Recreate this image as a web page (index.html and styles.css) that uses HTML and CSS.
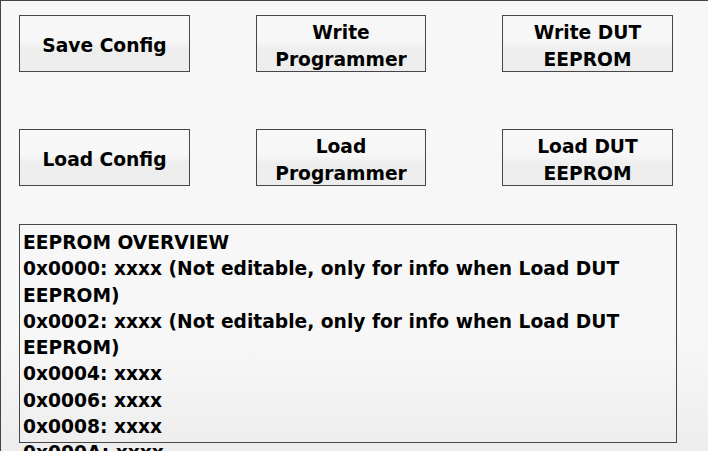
FILE: index.html
```
<!DOCTYPE html>
<html>
<head>
<meta charset="utf-8">
<link rel="stylesheet" href="styles.css">
</head>
<body>
<div class="window">
  <div class="buttons">
    <div class="btn">Save Config</div>
    <div class="btn">Write<br>Programmer</div>
    <div class="btn">Write DUT<br>EEPROM</div>
    <div class="btn">Load Config</div>
    <div class="btn">Load<br>Programmer</div>
    <div class="btn">Load DUT<br>EEPROM</div>
  </div>
  <div class="overview">
    <div class="text">EEPROM OVERVIEW<br>0x0000: xxxx (Not editable, only for info when Load DUT EEPROM)<br>0x0002: xxxx (Not editable, only for info when Load DUT EEPROM)<br>0x0004: xxxx<br>0x0006: xxxx<br>0x0008: xxxx<br>0x000A: xxxx</div>
  </div>
</div>
</body>
</html>
```
FILE: styles.css
```
html, body {
  margin: 0;
  padding: 0;
  height: 100%;
  overflow: hidden;
}
body {
  font-family: "DejaVu Sans", sans-serif;
  font-weight: bold;
  font-size: 18.67px;
  color: #000;
}
.window {
  box-sizing: border-box;
  width: 708px;
  height: 451px;
  border-top: 1px solid #444;
  border-left: 1px solid #444;
  background: linear-gradient(to bottom, #f7f7f7 0%, #f7f7f7 75%, #ededed 100%);
  padding: 14px 0 0 18px;
}
.buttons {
  display: grid;
  grid-template-columns: 237px 246px 171px;
  grid-template-rows: 57px 57px;
  row-gap: 57px;
}
.btn {
  box-sizing: border-box;
  width: 171px;
  height: 57px;
  border: 1px solid #474747;
  background: linear-gradient(to bottom, #f7f7f7 0%, #f7f7f7 45%, #eeeeee 60%, #ededed 100%);
  display: flex;
  align-items: center;
  justify-content: center;
  text-align: center;
  line-height: 26.5px;
  padding-top: 6px;
}
.buttons .btn:nth-child(2), .buttons .btn:nth-child(5) {
  width: 170px;
}
.overview {
  box-sizing: border-box;
  margin-top: 38px;
  width: 658px;
  height: 219px;
  border: 1px solid #474747;
  background: linear-gradient(to bottom, #f7f7f7 0%, #f7f7f7 55%, #eeeeee 100%);
  padding: 5px 0 0 3px;
}
.text {
  line-height: 26.3px;
  width: 645px;
}
```
